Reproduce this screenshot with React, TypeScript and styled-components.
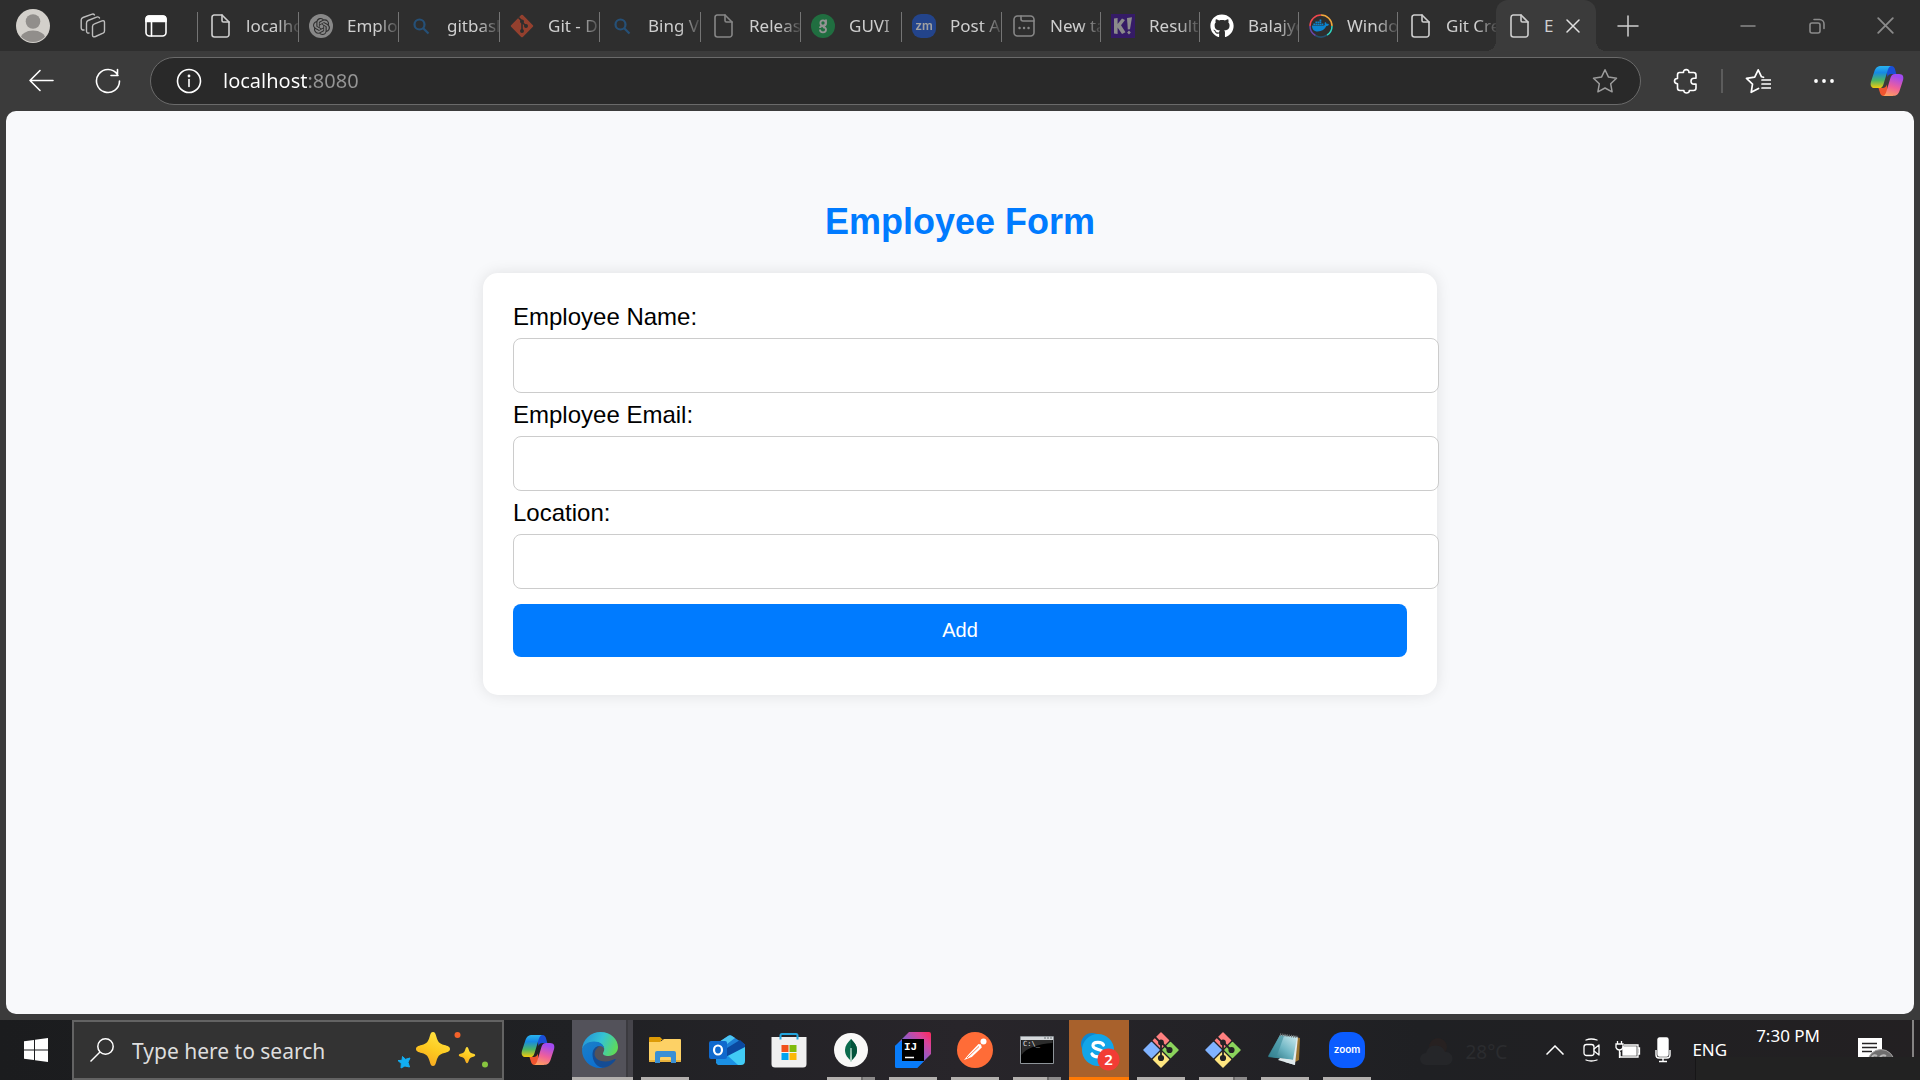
import React from 'react';
import styled, { createGlobalStyle, css } from 'styled-components';
import { FaDocker, FaGithub } from 'react-icons/fa';
import { SiOpenai } from 'react-icons/si';

const uiFont = '"Noto Sans", "Open Sans", sans-serif';
const pageFont = '"Liberation Sans", Arial, sans-serif';

const GlobalStyle = createGlobalStyle`
  *, *::before, *::after { box-sizing: border-box; }
  body { margin: 0; background: #3b3b3b; font-family: ${uiFont}; }
  button { border: 0; padding: 0; background: none; color: inherit; font: inherit; cursor: pointer; }
  svg { display: block; flex: none; }
`;

const Screen = styled.div`
  display: flex;
  flex-direction: column;
  min-height: 100vh;
  background: #3b3b3b;
`;

/* ---------- tab strip ---------- */

const TabStrip = styled.header`
  display: flex;
  height: 51px;
  background: #2e2e2e;
  color: #cfcfcf;
`;

const StripTools = styled.div`
  display: flex;
  align-items: center;
  justify-content: space-between;
  width: 197px;
  padding: 0 30px 0 16px;
`;

const IconButton = styled.button<{ $color?: string }>`
  display: flex;
  align-items: center;
  justify-content: center;
  color: ${(p) => p.$color ?? '#ffffff'};
`;

const WorkspacesButton = styled(IconButton)`
  margin-right: 9px;
`;

const TabList = styled.nav`
  display: flex;
`;

const Tab = styled.button<{ $width: number }>`
  display: flex;
  align-items: center;
  gap: 14px;
  width: ${(p) => p.$width}px;
  padding-left: 11px;
  background: linear-gradient(#747474, #747474) 0 12px / 1px 30px no-repeat;
  overflow: hidden;
  font-size: 17px;
  line-height: 24px;
`;

const TabTitle = styled.span`
  flex: 1;
  overflow: hidden;
  text-align: left;
  white-space: nowrap;
  mask-image: linear-gradient(90deg, #000 60%, rgba(0, 0, 0, 0.15) 100%);
`;

const Favicon = styled.span<{ $asleep?: boolean }>`
  display: flex;
  align-items: center;
  justify-content: center;
  flex: none;
  width: 24px;
  height: 24px;
  opacity: ${(p) => (p.$asleep ? 0.55 : 1)};
`;

const ActiveTab = styled.div`
  position: relative;
  display: flex;
  align-items: center;
  width: 100px;
  padding: 0 16px 0 11px;
  border-radius: 12px 12px 0 0;
  background: #3b3b3b;
  font-size: 17px;
  line-height: 24px;

  &::before,
  &::after {
    content: '';
    position: absolute;
    bottom: 0;
    width: 10px;
    height: 10px;
  }
  &::before {
    right: 100%;
    background: radial-gradient(circle at 0 0, #2e2e2e 10px, #3b3b3b 10px);
  }
  &::after {
    left: 100%;
    background: radial-gradient(circle at 100% 0, #2e2e2e 10px, #3b3b3b 10px);
  }
`;

const ActiveTitle = styled.span`
  flex: 1;
  padding-left: 13px;
`;

const NewTab = styled(IconButton)`
  width: 64px;
`;

const WindowControls = styled.div`
  display: flex;
  margin-left: auto;
`;

const WindowButton = styled(IconButton)`
  width: 69px;
`;

/* ---------- toolbar ---------- */

const Toolbar = styled.div`
  display: flex;
  align-items: center;
  height: 60px;
  padding: 0 16px 0 28px;
`;

const NavButtons = styled.div`
  display: flex;
  gap: 41px;
  margin-right: 29px;
`;

const AddressBar = styled.form`
  display: flex;
  flex: 1;
  align-items: center;
  gap: 21px;
  height: 48px;
  padding: 0 22px 0 25px;
  border: 1px solid #6a6a6a;
  border-radius: 24px;
  background: #292929;
`;

const AddressInput = styled.input`
  flex: 1;
  min-width: 0;
  padding: 0;
  border: 0;
  outline: 0;
  background: linear-gradient(90deg, #ffffff 84px, #959595 84px);
  background-clip: text;
  color: transparent;
  font: 20px/30px ${uiFont};
`;

const ToolbarActions = styled.div`
  display: flex;
  align-items: center;
  padding-left: 32px;
`;

const ToolbarDivider = styled.span`
  width: 2px;
  height: 24px;
  margin: 0 22px;
  background: #5c5c5c;
`;

const MoreButton = styled(IconButton)`
  margin: 0 36px 0 43px;
`;

/* ---------- employee page ---------- */

const Page = styled.main`
  flex: 1;
  margin: 0 6px 6px;
  padding-top: 90px;
  border-radius: 10px;
  background: #f8f9fb;
  color: #000000;
  font-family: ${pageFont};
`;

const PageTitle = styled.h1`
  margin: 0 0 30px;
  color: #007bff;
  font-size: 36px;
  line-height: 42px;
  text-align: center;
`;

const Card = styled.form`
  display: flex;
  flex-direction: column;
  gap: 8px;
  width: 50%;
  margin: 0 auto;
  padding: 30px;
  border-radius: 15px;
  background: #ffffff;
  box-shadow: 0 0 15px rgba(0, 0, 0, 0.1);
`;

const Label = styled.label`
  font-size: 24px;
  line-height: 27px;
`;

const TextField = styled.input`
  box-sizing: content-box;
  width: 100%;
  height: 23px;
  padding: 15px;
  border: 1px solid #cccccc;
  border-radius: 8px;
  background: #ffffff;
  font: 20px/23px ${pageFont};
`;

const SubmitButton = styled.button`
  height: 53px;
  margin: 7px 0 8px;
  border-radius: 8px;
  background: #007bff;
  color: #ffffff;
  font: 20px/23px ${pageFont};
`;

/* ---------- taskbar ---------- */

const Taskbar = styled.footer`
  position: relative;
  display: flex;
  height: 60px;
  background: linear-gradient(90deg, #1b1c1e 0, #202124 30%, #28252a 50%, #1f2023 74%, #232022 100%);
  color: #ffffff;
`;

const StartButton = styled(IconButton)`
  width: 72px;
`;

const SearchBox = styled.label`
  display: flex;
  align-items: center;
  gap: 17px;
  width: 432px;
  padding: 0 13px 0 15px;
  border: 2px solid #636363;
  background: #333333;
`;

const SearchInput = styled.input`
  flex: 1;
  min-width: 0;
  padding: 2px 0 0;
  border: 0;
  outline: 0;
  background: none;
  color: #dedede;
  font: 21px/30px ${uiFont};

  &::placeholder {
    color: #dedede;
    opacity: 1;
  }
`;

const AppRow = styled.div`
  display: flex;
  gap: 2px;
`;

type Running = 'no' | 'one' | 'many' | 'alert' | 'focused';

const appStates = {
  no: null,
  one: css`
    background: linear-gradient(#b3b0ae, #b3b0ae) no-repeat 6px 57px / 48px 3px;
  `,
  many: css`
    background: linear-gradient(90deg, #b3b0ae 34px, #6e6c6c 34px, #6e6c6c 36px, #8c8a8a 36px) no-repeat 6px 57px / 48px 3px;
  `,
  alert: css`
    padding-top: 3px;
    border-bottom: 3px solid #ff7a05;
    background: #a8612c;
  `,
  focused: css`
    width: 61px;
    padding: 3px 6px 0 0;
    border-bottom: 3px solid #b3b0ae;
    background: linear-gradient(90deg, #53525a 54px, #3b3a3f 54px, #3b3a3f 56px, #45444a 56px);
  `,
};

const AppButton = styled.button<{ $running: Running }>`
  display: flex;
  align-items: center;
  justify-content: center;
  width: 60px;
  ${(p) => appStates[p.$running]}
`;

const CopilotButton = styled(IconButton)`
  width: 68px;
`;

const Tray = styled.div`
  display: flex;
  align-items: flex-start;
  height: 60px;
  margin-left: auto;
  font-size: 17px;
  line-height: 22px;
`;

const Weather = styled.div`
  display: flex;
  align-items: center;
  gap: 10px;
  height: 60px;
  margin-right: 39px;
  padding-top: 4px;
  color: #2b2c2f;
  font-size: 19px;
`;

const TrayIcons = styled.div`
  display: flex;
  align-items: center;
  gap: 14px;
  height: 60px;
`;

const Language = styled.button`
  height: 22px;
  margin: 19px 0 0 21px;
`;

const Clock = styled.time`
  margin: 5px 0 0 29px;
`;

const Notifications = styled(IconButton)`
  margin: 17px 17px 0 38px;
`;

const ShowDesktop = styled.div`
  width: 8px;
  height: 37px;
  border-left: 2px solid #858383;
`;

/* A dark panel that hides the lower part of the notification area. */
const TrayCover = styled.div`
  position: absolute;
  right: 0;
  bottom: 0;
  width: 225px;
  height: 23px;
  border-left: 1px solid #171617;
  background: #222222;
`;

/* ---------- icons ---------- */

const line = { fill: 'none', stroke: 'currentColor', strokeLinecap: 'round', strokeLinejoin: 'round' } as const;

const DocumentIcon = () => (
  <svg width="24" height="24" viewBox="0 0 24 24" {...line} strokeWidth="1.6">
    <path d="M6 1h8l7 7v12.500a2.500 2.500 0 0 1-2.500 2.500h-12A2.500 2.500 0 0 1 4 20.500V3.500A2.500 2.500 0 0 1 6 1z" />
    <path d="M14 1v5.500A1.500 1.500 0 0 0 15.500 8H21" />
  </svg>
);

const AvatarIcon = () => (
  <svg width="34" height="34" viewBox="0 0 34 34">
    <clipPath id="avatar"><circle cx="17" cy="17" r="16" /></clipPath>
    <circle cx="17" cy="17" r="17" fill="#d3d0cb" />
    <g clipPath="url(#avatar)" fill="#918e8b">
      <circle cx="17" cy="12.500" r="7.300" />
      <ellipse cx="17" cy="30" rx="12.500" ry="8.500" />
    </g>
  </svg>
);

const WorkspacesIcon = () => (
  <svg width="26" height="26" viewBox="0 0 26 26" {...line} strokeWidth="1.400">
    <path d="M14.500 10.800l7.500-2.900q2.500-.8 2.500 1.500v8.600q0 1.500-1.500 2.200l-7.500 3.300q-3 1.200-3-1.600v-8.400q0-2 2-2.700z" />
    <path d="M9 20c-1.400.4-2.500-.4-2.500-2v-8q0-1.800 1.600-2.500l8.500-3.400q2.200-.7 2.900 1" />
    <path d="M4 17c-1.500.3-2.800-.6-2.800-2.300V7q0-1.800 1.800-2.500l8.500-3.200q2.200-.7 2.900 .6" />
  </svg>
);

const TabActionsIcon = () => (
  <svg width="22" height="22" viewBox="0 0 22 22" {...line} strokeWidth="1.600">
    <rect x="1" y="1" width="20" height="20" rx="3.500" />
    <path d="M1 6.500V4a3 3 0 0 1 3-3h14a3 3 0 0 1 3 3v2.500z" fill="currentColor" />
    <path d="M6.500 7v14" />
  </svg>
);

const SearchFavicon = () => (
  <svg width="24" height="24" viewBox="0 0 24 24" fill="none" stroke="#1e6cb4" strokeWidth="2.200">
    <circle cx="10.500" cy="10.500" r="5" />
    <path d="M14 14l5.500 5.500" />
  </svg>
);

const GitFavicon = () => (
  <svg width="24" height="24" viewBox="0 0 24 24">
    <rect x="3.700" y="3.700" width="16.600" height="16.600" rx="1.200" transform="rotate(45 12 12)" fill="#e8502f" />
    <g stroke="#2e2e2e" strokeWidth="1.600" fill="#2e2e2e">
      <path d="M8.500 3.500L12 7v10M12 8l4 4" fill="none" />
      <circle cx="12" cy="7.500" r="1.200" /><circle cx="12" cy="17" r="1.200" /><circle cx="16" cy="12" r="1.200" />
    </g>
  </svg>
);

const OpenAiFavicon = () => (
  <svg width="24" height="24" viewBox="0 0 24 24">
    <circle cx="12" cy="12" r="12" fill="#d2d2d2" />
    <SiOpenai x="4" y="4" width="16" height="16" color="#2e2e2e" />
  </svg>
);

const GuviFavicon = () => (
  <svg width="24" height="24" viewBox="0 0 24 24">
    <circle cx="12" cy="12" r="12" fill="#16a34f" />
    <g fill="none" stroke="#e8e8e8" strokeWidth="1.800">
      <circle cx="12" cy="9" r="2.600" />
      <path d="M15 5.500v3.500q0 3-3 3c-2 0-3 .8-3 2M9 15.500c0 3.800 6 3.800 6 0q0-2.200-3-2.200" />
    </g>
  </svg>
);

const ZmFavicon = () => (
  <svg width="24" height="24" viewBox="0 0 24 24">
    <rect width="24" height="24" rx="9" fill="#1b57d8" />
    <text x="12" y="16" textAnchor="middle" fontFamily="Inter, sans-serif" fontWeight="600" fontSize="12" fill="#fff">zm</text>
  </svg>
);

const NewTabFavicon = () => (
  <svg width="24" height="24" viewBox="0 0 24 24" {...line} strokeWidth="1.600">
    <rect x="2" y="2" width="20" height="20" rx="3.500" />
    <path d="M9 2v3a2 2 0 0 0 2 2h11" />
    <path d="M7.500 14h.1M12 14h.1M16.500 14h.1" strokeWidth="2.400" />
  </svg>
);

const KahootFavicon = () => (
  <svg width="24" height="24" viewBox="0 0 24 24">
    <rect width="24" height="24" fill="#3b0c94" />
    <g fill="#d8d8d8">
      <path d="M3 4.500l3.600-.5v6L11 4.500l3 1.400-4 5.400 4.500 7L11 20l-4.400-6.500V20L3 19.500z" />
      <path d="M16 4l5-.8-2 12-2.200.3z" /><path d="M18 16.500l1.800 2L18 20.600l-1.900-2z" />
    </g>
  </svg>
);

const DockerFavicon = () => (
  <svg width="24" height="24" viewBox="0 0 24 24" fill="none" strokeWidth="1.500">
    <path d="M1 12A11 11 0 0 1 12 1" stroke="#f0484e" />
    <path d="M12 1a11 11 0 0 1 11 11" stroke="#f3a83c" />
    <path d="M23 12a11 11 0 0 1-5 9.200" stroke="#2fd8c3" />
    <path d="M18 21.200a11 11 0 0 1-11.500.3" stroke="#24506e" />
    <path d="M6.500 21.500A11 11 0 0 1 1 12" stroke="#6a45a8" />
    <FaDocker x="3" y="3" width="18" height="18" color="#0b84d0" />
  </svg>
);

const CloseIcon = ({ size = 14 }: { size?: number }) => (
  <svg width={size} height={size} viewBox="0 0 14 14" {...line} strokeWidth="1.500">
    <path d="M1 1l12 12M13 1L1 13" />
  </svg>
);

const PlusIcon = () => (
  <svg width="22" height="22" viewBox="0 0 22 22" {...line} strokeWidth="1.500"><path d="M11 1v20M1 11h20" /></svg>
);

const MinimizeIcon = () => (
  <svg width="16" height="16" viewBox="0 0 16 16" {...line} strokeWidth="1.500"><path d="M1 8h14" /></svg>
);

const RestoreIcon = () => (
  <svg width="16" height="16" viewBox="0 0 16 16" {...line} strokeWidth="1.600">
    <rect x="1" y="5" width="10" height="10" rx="2" />
    <path d="M5 1.500h5.500A4.500 4.500 0 0 1 15 6v4.500" />
  </svg>
);

const BackIcon = () => (
  <svg width="26" height="26" viewBox="0 0 26 26" {...line} strokeWidth="1.600">
    <path d="M25 12.500H2M12 2.500L2 12.500l10 10" />
  </svg>
);

const ReloadIcon = () => (
  <svg width="26" height="26" viewBox="0 0 26 26" {...line} strokeWidth="1.600">
    <path d="M24.500 13A11.500 11.500 0 1 1 22.500 6.500V1.500M23 7.500h-7" />
  </svg>
);

const InfoIcon = () => (
  <svg width="26" height="26" viewBox="0 0 26 26" {...line} strokeWidth="1.600">
    <circle cx="13" cy="13" r="11.500" /><path d="M13 11.500v7" /><circle cx="13" cy="8" r=".6" fill="currentColor" />
  </svg>
);

const StarIcon = () => (
  <svg width="26" height="26" viewBox="0 0 26 26" {...line} strokeWidth="1.500">
    <path d="M13 1.800l3.500 7.300 8 1.100-5.800 5.600 1.400 8L13 20l-7.100 3.800 1.400-8-5.800-5.600 8-1.100z" />
  </svg>
);

const PuzzleIcon = () => (
  <svg width="26" height="26" viewBox="0 0 26 26" {...line} strokeWidth="1.600">
    <path d="M6.500 4.500h4c-.6-3.800 6-3.800 5.400 0h4.600q2.500 0 2.500 2.500v3.300h-2c-4 0-4 5.800 0 5.800h2V20q0 2.500-2.500 2.500h-4.200c.4 3.400-5.800 3.400-5.400 0H7q-2.500 0-2.500-2.500v-4.300c-4 0-4-5.200 0-5.200V7q0-2.500 2-2.500z" />
  </svg>
);

const FavoritesIcon = () => (
  <svg width="26" height="26" viewBox="0 0 26 26" {...line} strokeWidth="1.700">
    <path d="M13.500 20.500l-7.300 3.800 1.300-8.200L1.500 10.400l8.200-1.200L13.200 1.800l3.300 7 2 .5M17 12h8.500M17 16h8.500M17 20h8.500" />
  </svg>
);

const DotsIcon = () => (
  <svg width="20" height="6" viewBox="0 0 20 6" fill="currentColor">
    <circle cx="2" cy="3" r="1.900" /><circle cx="10" cy="3" r="1.900" /><circle cx="18" cy="3" r="1.900" />
  </svg>
);

const CopilotIcon = ({ id }: { id: string }) => (
  <svg width="34" height="32" viewBox="0 0 34 32">
    <defs>
      <linearGradient id={`${id}a`} x1="0" y1="0" x2="0" y2="1">
        <stop offset="0" stopColor="#2ab4f0" /><stop offset=".3" stopColor="#1689e4" /><stop offset=".65" stopColor="#4cb564" /><stop offset="1" stopColor="#f7cb0c" />
      </linearGradient>
      <linearGradient id={`${id}b`} x1="0.300" y1="0" x2="0" y2="1">
        <stop offset="0" stopColor="#a24af0" /><stop offset=".5" stopColor="#f0609a" /><stop offset="1" stopColor="#ffab57" />
      </linearGradient>
    </defs>
    <path d="M16 1h5.500c2 0 3 1.500 3.600 3.500L26.300 9h-4.500c-2.500 0-3.600 1-4.300 3z" fill="#1a4fd6" />
    <path d="M18 31h-4.500c-2 0-3-1.500-3.600-3.500L8.500 23h4c2.500 0 3.700-1.300 4.400-3.500z" fill="#f0552f" />
    <path d="M11.500 1H21c-1.700.4-2.600 2-3.300 4.200l-4.200 14c-.8 2.500-2 3.900-4.500 3.900H5c-4 0-5-2.800-4-6.400L4.400 6.200C5.600 2.700 7.500 1 11.500 1z" fill={`url(#${id}a)`} />
    <path d="M22.500 31H13c1.700-.4 2.600-2 3.300-4.200l4.200-14c.8-2.500 2-3.900 4.500-3.900h4c4 0 5 2.800 4 6.400l-3.400 10.500c-1.200 3.500-3.100 5.200-7.100 5.200z" fill={`url(#${id}b)`} />
  </svg>
);

const WindowsIcon = () => (
  <svg width="24" height="24" viewBox="0 0 24 24" fill="#fff">
    <path d="M0 3.300l10-1.400v9.600H0zM11 1.700L24 0v11.500H11zM0 12.500h10v9.600l-10-1.400zM11 12.500h13V24l-13-1.700z" />
  </svg>
);

const MagnifierIcon = () => (
  <svg width="26" height="26" viewBox="0 0 26 26" fill="none" stroke="#fff" strokeWidth="1.500">
    <circle cx="16.500" cy="9.500" r="7.700" /><path d="M11 15L1.500 24.500" />
  </svg>
);

const SparklesIcon = () => (
  <svg width="92" height="38" viewBox="0 0 92 38">
    <defs>
      <linearGradient id="spark" x1=".7" y1=".1" x2=".3" y2="1">
        <stop offset="0" stopColor="#ffdf3d" /><stop offset=".5" stopColor="#fdc91f" /><stop offset="1" stopColor="#f6a623" />
      </linearGradient>
    </defs>
    <path d="M36 1c2 0 2.600 2 3.300 4.500 1.500 5.200 2.700 7 8 8.500 3.500 1 5.700 1.600 5.700 4s-2.200 3-5.700 4c-5.300 1.500-6.500 3.300-8 8.500C38.600 33 38 35 36 35s-2.600-2-3.300-4.500c-1.500-5.200-2.700-7-8-8.500-3.500-1-5.700-1.600-5.700-4s2.200-3 5.700-4c5.300-1.500 6.500-3.300 8-8.500C33.400 3 34 1 36 1z" fill="url(#spark)" />
    <path d="M70 16c1 0 1.400 1.500 1.800 2.800.8 2.500 1.300 2.900 3.700 3.700 1.300.4 2.700.6 2.700 1.700s-1.400 1.300-2.700 1.700c-2.400.8-2.900 1.200-3.700 3.700-.4 1.300-.8 2.600-1.800 2.600s-1.400-1.300-1.800-2.600c-.8-2.500-1.300-2.900-3.700-3.700-1.300-.4-2.700-.6-2.700-1.700s1.400-1.300 2.700-1.700c2.400-.8 2.900-1.200 3.700-3.700.4-1.300.8-2.800 1.800-2.800z" fill="url(#spark)" />
    <path d="M5.500 25.500l3 2.800 4.500-1.300-2 4.200 1.500 4.800-4.600-1L4 37l.3-4.600L1 29.600l4-.3z" fill="#12aef2" stroke="#12aef2" strokeLinejoin="round" />
    <circle cx="60.500" cy="4" r="3" fill="#f4622a" />
    <circle cx="88" cy="33.500" r="3" fill="#88c53f" />
  </svg>
);

const EdgeIcon = () => (
  <svg width="36" height="36" viewBox="0 0 36 36">
    <defs>
      <linearGradient id="edgeTop" x1="0" y1=".3" x2="1" y2=".6"><stop offset="0" stopColor="#2493d8" /><stop offset=".5" stopColor="#34c3d4" /><stop offset="1" stopColor="#60dc55" /></linearGradient>
      <linearGradient id="edgeBody" x1="0" y1="0" x2=".6" y2="1"><stop offset="0" stopColor="#1a80c8" /><stop offset="1" stopColor="#0d6fd0" /></linearGradient>
    </defs>
    <path d="M0 18C.5 7 9 0 18.500 0 29 0 36 7.500 36 15c0 5.500-4.500 9-9.500 9-4 0-5.500-1.400-5.500-2.600 0-1 1.200-1.600 1.200-4.400 0-3.700-4-7-9.700-7C6 10 1.500 13.500 0 18z" fill="url(#edgeTop)" />
    <path d="M0 18c1-5 5.500-8.500 12-8.500 6 0 10.200 3.500 10.200 7.500 0-1.500-2.200-3-4.500-3C13 14 11 18 11 21.500 11 29 17 35 23 35c-1.500.6-3 1-5 1C8 36 0 28 0 18z" fill="url(#edgeBody)" />
    <path d="M17.700 14C14 16 12.500 19 12.500 22c0 3 3 7.500 11 7.500 4 0 7.500-1.500 9.200-2.400.8-.4 1.300.2.800 1C31 32 26 35.600 20.500 35.800 13.500 34.500 10.500 28 10.500 22.500 10.500 17.500 14 14 17.700 14z" fill="#144c94" />
  </svg>
);

const ExplorerIcon = () => (
  <svg width="32" height="28" viewBox="0 0 32 28">
    <path d="M0 2a1 1 0 0 1 1-1h10l3 3h-2v4H0z" fill="#dd9a06" />
    <path d="M0 6h11l4-3h16a1 1 0 0 1 1 1v21a1 1 0 0 1-1 1H1a1 1 0 0 1-1-1z" fill="#fdd165" />
    <path d="M0 24h32v1a1 1 0 0 1-1 1H1a1 1 0 0 1-1-1z" fill="#e9b33d" />
    <path d="M6 27V17a2 2 0 0 1 2-2h17a2 2 0 0 1 2 2v10h-5v-5a1 1 0 0 0-1-1h-9a1 1 0 0 0-1 1v5z" fill="#3a90d5" />
  </svg>
);

const OutlookIcon = () => (
  <svg width="36" height="32" viewBox="0 0 36 32">
    <path d="M7 10L19 2q2-1.500 4 0l13 8.500V24H7z" fill="#1d7fd6" />
    <path d="M10 8l9-6q2-1.500 4 0l3 2-12 9z" fill="#4cc5f2" />
    <path d="M18 14L31 6l5 4.500V14L18 24z" fill="#0b49a0" />
    <path d="M36 13v14a4 4 0 0 1-4 4H11a4 4 0 0 1-4-3z" fill="#41cbf5" />
    <path d="M7 22h12l10 9H11a4 4 0 0 1-4-4z" fill="#1b90e4" />
    <rect y="7" width="18" height="18" rx="2" fill="#1069cd" />
    <ellipse cx="9" cy="16" rx="4" ry="4.500" fill="none" stroke="#fff" strokeWidth="2.200" />
  </svg>
);

const StoreIcon = () => (
  <svg width="36" height="36" viewBox="0 0 36 36">
    <path d="M0.500 5h35v27a3.500 3.500 0 0 1-3.500 3.500H4A3.500 3.500 0 0 1 .5 32z" fill="#f0f0f0" />
    <path d="M9.500 7.500V3.500q0-1.500 1.500-1.500h14q1.500 0 1.500 1.500v4" fill="none" stroke="#23a5dd" strokeWidth="2" />
    <path d="M10.500 13h7v7h-7z" fill="#f1511b" /><path d="M18.500 13h7v7h-7z" fill="#80bb0a" />
    <path d="M10.500 21h7v7h-7z" fill="#00a3ee" /><path d="M18.500 21h7v7h-7z" fill="#fbb90a" />
  </svg>
);

const MongoIcon = () => (
  <svg width="36" height="36" viewBox="0 0 36 36">
    <circle cx="18" cy="18" r="17" fill="#f8f8f7" />
    <path d="M18 7c3.500 3.500 6 7 6 11 0 5-3 8.500-6 10.500C15 26.500 12 23 12 18c0-4 2.500-7.500 6-11z" fill="#0b6b4d" />
    <path d="M18 7c3.500 3.500 6 7 6 11 0 5-3 8.500-6 10.500z" fill="#02533b" />
    <path d="M17.300 16h1.400l.3 11-.6 3h-.8l-.6-3z" fill="#a8cfbf" />
  </svg>
);

const IntellijIcon = () => (
  <svg width="36" height="36" viewBox="0 0 36 36">
    <defs>
      <linearGradient id="ij" x1="0" y1="1" x2="1" y2="0"><stop offset=".35" stopColor="#087cfa" /><stop offset=".5" stopColor="#8060d0" /><stop offset=".8" stopColor="#d9439a" /><stop offset="1" stopColor="#fe2857" /></linearGradient>
    </defs>
    <path d="M14 0h20a2 2 0 0 1 2 2v20L22 36H2a2 2 0 0 1-2-2V14z" fill="url(#ij)" />
    <path d="M0 14l7-5v20h22l-7 7H2a2 2 0 0 1-2-2z" fill="#087cfa" />
    <rect x="7" y="7" width="22" height="22" fill="#000" />
    <path d="M10 25.500h9" stroke="#fff" strokeWidth="1.500" />
    <text x="9" y="18" fontFamily="Liberation Mono, monospace" fontWeight="700" fontSize="11" fill="#fff">IJ</text>
  </svg>
);

const PostmanIcon = () => (
  <svg width="36" height="36" viewBox="0 0 36 36">
    <circle cx="18" cy="18" r="18" fill="#ff6c37" />
    <circle cx="26.500" cy="9.500" r="3" fill="#fff" />
    <path d="M7 28l5-6 9.500-10 2.500.6.800 3-10 9.400z" fill="#fff" />
    <path d="M10 26l12-11.500" stroke="#ff6c37" strokeWidth=".9" />
  </svg>
);

const TerminalIcon = () => (
  <svg width="34" height="28" viewBox="0 0 34 28">
    <path d="M.5.5h33v27H.5z" fill="#000" stroke="#8e9499" />
    <path d="M1 1h32v3H1z" fill="#d5d8db" /><path d="M24 2h2M27 2h2M30 2h2" stroke="#6b7075" />
    <path d="M1.500 4h31v3C18 8 6 12 1.500 19z" fill="#2c2c2c" />
    <text x="3" y="10" fontFamily="DejaVu Sans Mono, monospace" fontSize="7" fill="#e0e0e0">C:\_</text>
  </svg>
);

const SkypeIcon = () => (
  <svg width="42" height="42" viewBox="-3 -3 42 42">
    <circle cx="11" cy="12" r="11" fill="#0f86cf" />
    <circle cx="22" cy="24" r="10" fill="#0b7cc8" />
    <circle cx="17" cy="18" r="16" fill="#12a5e8" />
    <path d="M22.500 13c-1.500-3.500-10.500-3.500-10.500.5 0 5 10.500 3 10.500 8 0 4.500-9.500 4.500-11.500.5" fill="none" stroke="#fff" strokeWidth="3.200" strokeLinecap="round" />
    <circle cx="27.500" cy="27.500" r="11" fill="#f23c35" />
    <text x="27.500" y="33" textAnchor="middle" fontFamily="Noto Sans, sans-serif" fontWeight="600" fontSize="15" fill="#fff">2</text>
  </svg>
);

const GitBashIcon = () => (
  <svg width="36" height="36" viewBox="0 0 36 36">
    <g strokeWidth="1.500" strokeLinejoin="round">
      <path d="M18 1l7.500 7.500L18 16l-7.500-7.500z" fill="#ff8080" stroke="#ff8080" />
      <path d="M27.500 10.500L35 18l-7.500 7.500L20 18z" fill="#8bd45c" stroke="#8bd45c" />
      <path d="M18 20l7.500 7.500L18 35l-7.500-7.500z" fill="#ffe680" stroke="#ffe680" />
      <path d="M8.500 10.500L16 18l-7.500 7.500L1 18z" fill="#80b3ff" stroke="#80b3ff" />
    </g>
    <g stroke="#242226" strokeWidth="1.800" fill="#242226">
      <path d="M11 4l7 7v15M18 10l8 8" fill="none" />
      <circle cx="18" cy="10.500" r="2" /><circle cx="26.500" cy="18" r="2.200" /><circle cx="18" cy="26" r="2.200" />
    </g>
  </svg>
);

const NotepadIcon = () => (
  <svg width="36" height="36" viewBox="0 0 36 36">
    <defs>
      <linearGradient id="pad" x1="0" y1="1" x2="1" y2="0"><stop offset="0" stopColor="#1d6a78" /><stop offset=".5" stopColor="#6fb6c4" /><stop offset="1" stopColor="#d3eef2" /></linearGradient>
    </defs>
    <path d="M29 5l4 1-1 22-4 2z" fill="#9a7432" />
    <path d="M13 3l18 2-3 28-10-3z" fill="#e4ecee" />
    <path d="M13 3l17 2-4 23-25-3z" fill="url(#pad)" />
    <path d="M13 3l4 1-8 22-8-2z" fill="#3b8b99" opacity=".6" />
    <path d="M13 26l14 2 1 5-17-5z" fill="#dfe9eb" />
    <path d="M13 2.500l18 2.500" stroke="#6d7476" strokeWidth="2.500" strokeDasharray="1.200 1" />
  </svg>
);

const ZoomIcon = () => (
  <svg width="36" height="36" viewBox="0 0 36 36">
    <rect width="36" height="36" rx="14" fill="#0b5cff" />
    <text x="18" y="21" textAnchor="middle" fontFamily="Inter, sans-serif" fontWeight="600" fontSize="10" fill="#fff">zoom</text>
  </svg>
);

const WeatherIcon = () => (
  <svg width="38" height="34" viewBox="0 0 38 34">
    <circle cx="20" cy="12" r="9" fill="#272121" />
    <path d="M8 30a6 6 0 0 1 0-12 10 10 0 0 1 19-1 6.500 6.500 0 0 1 2 13z" fill="#252629" />
  </svg>
);

const ChevronUpIcon = () => (
  <svg width="23" height="10" viewBox="0 0 23 10" fill="none" stroke="#fff" strokeWidth="1.500"><path d="M.5 9.500L9 1l8.500 8.500" /></svg>
);

const CameraIcon = () => (
  <svg width="18" height="24" viewBox="0 0 18 24" {...line} strokeWidth="1.300">
    <rect x="1" y="6.500" width="10" height="11" rx="2.500" /><path d="M11 11l5-4v10l-5-4M3 2q5-2 11 0M3 22q5 2 11 0" />
  </svg>
);

const BatteryIcon = () => (
  <svg width="26" height="18" viewBox="0 0 26 18" fill="none" stroke="#fff" strokeWidth="1.300">
    <path d="M9 4h14v12H5v-5M23 7h1.500v6H23" /><path d="M8 6h13v8H8z" fill="#fff" />
    <path d="M2.500 0v3M6.500 0v3M1 3h7v3.500Q7 9 4.500 9 2 9 1 6.500zM4.500 9v8" />
  </svg>
);

const MicIcon = () => (
  <svg width="16" height="26" viewBox="0 0 16 26" fill="none" stroke="#fff" strokeWidth="1.400">
    <rect x="3" y="1" width="10" height="18" rx="1.500" fill="#fff" /><path d="M1 13v5q0 3 3 3h8q3 0 3-3v-5M8 21v4M4 24.500h8" />
  </svg>
);

const NotificationIcon = () => (
  <svg width="37" height="26" viewBox="0 0 37 26">
    <path d="M0 1h24v20H9l-4 4v-4H0z" fill="#fff" />
    <path d="M4 6.500h15M4 10.500h15M4 14.500h10" stroke="#262425" strokeWidth="1.300" />
    <circle cx="23" cy="26" r="13.500" fill="#6f6e6e" stroke="#a5a3a3" />
    <path d="M14 20q2-3 5-1M22 20q3-3 6-1" stroke="#b9b8b8" strokeWidth="2" fill="none" />
  </svg>
);

/* ---------- data ---------- */

const tabs = [
  { title: 'localho', width: 101, icon: <DocumentIcon /> },
  { title: 'Emplo', width: 100, icon: <OpenAiFavicon />, asleep: true },
  { title: 'gitbash', width: 101, icon: <SearchFavicon />, asleep: true },
  { title: 'Git - D', width: 100, icon: <GitFavicon />, asleep: true },
  { title: 'Bing V', width: 101, icon: <SearchFavicon />, asleep: true },
  { title: 'Releas', width: 100, icon: <DocumentIcon />, asleep: true },
  { title: 'GUVI', width: 101, icon: <GuviFavicon />, asleep: true },
  { title: 'Post A', width: 100, icon: <ZmFavicon />, asleep: true },
  { title: 'New ta', width: 99, icon: <NewTabFavicon />, asleep: true },
  { title: 'Result', width: 99, icon: <KahootFavicon />, asleep: true },
  { title: 'Balajyo', width: 99, icon: <FaGithub size={24} color="#ffffff" /> },
  { title: 'Windo', width: 99, icon: <DockerFavicon /> },
  { title: 'Git Cre', width: 99, icon: <DocumentIcon /> },
];

const apps: { name: string; running: Running; icon: React.ReactNode }[] = [
  { name: 'Microsoft Edge', running: 'focused', icon: <EdgeIcon /> },
  { name: 'File Explorer', running: 'one', icon: <ExplorerIcon /> },
  { name: 'Outlook', running: 'no', icon: <OutlookIcon /> },
  { name: 'Microsoft Store', running: 'no', icon: <StoreIcon /> },
  { name: 'MongoDB Compass', running: 'many', icon: <MongoIcon /> },
  { name: 'IntelliJ IDEA', running: 'one', icon: <IntellijIcon /> },
  { name: 'Postman', running: 'one', icon: <PostmanIcon /> },
  { name: 'Command Prompt', running: 'many', icon: <TerminalIcon /> },
  { name: 'Skype', running: 'alert', icon: <SkypeIcon /> },
  { name: 'Git Bash', running: 'one', icon: <GitBashIcon /> },
  { name: 'Git GUI', running: 'many', icon: <GitBashIcon /> },
  { name: 'Notepad', running: 'one', icon: <NotepadIcon /> },
  { name: 'Zoom', running: 'one', icon: <ZoomIcon /> },
];

const fields = [
  { id: 'name', label: 'Employee Name:', type: 'text' },
  { id: 'email', label: 'Employee Email:', type: 'email' },
  { id: 'location', label: 'Location:', type: 'text' },
];

export default function App() {
  return (
    <Screen>
      <GlobalStyle />
      <TabStrip>
        <StripTools>
          <IconButton aria-label="Profile"><AvatarIcon /></IconButton>
          <WorkspacesButton aria-label="Workspaces" $color="#bdbdbd"><WorkspacesIcon /></WorkspacesButton>
          <IconButton aria-label="Tab actions"><TabActionsIcon /></IconButton>
        </StripTools>
        <TabList aria-label="Tabs">
          {tabs.map((tab) => (
            <Tab key={tab.title} $width={tab.width}>
              <Favicon $asleep={tab.asleep}>{tab.icon}</Favicon>
              <TabTitle>{tab.title}</TabTitle>
            </Tab>
          ))}
          <ActiveTab>
            <Favicon><DocumentIcon /></Favicon>
            <ActiveTitle>E</ActiveTitle>
            <IconButton aria-label="Close tab" $color="#e0e0e0"><CloseIcon /></IconButton>
          </ActiveTab>
          <NewTab aria-label="New tab" $color="#cfcfcf"><PlusIcon /></NewTab>
        </TabList>
        <WindowControls>
          <WindowButton aria-label="Minimize" $color="#8a8a8a"><MinimizeIcon /></WindowButton>
          <WindowButton aria-label="Restore" $color="#8a8a8a"><RestoreIcon /></WindowButton>
          <WindowButton aria-label="Close" $color="#8a8a8a"><CloseIcon size={17} /></WindowButton>
        </WindowControls>
      </TabStrip>

      <Toolbar>
        <NavButtons>
          <IconButton aria-label="Back"><BackIcon /></IconButton>
          <IconButton aria-label="Reload"><ReloadIcon /></IconButton>
        </NavButtons>
        <AddressBar onSubmit={(e) => e.preventDefault()}>
          <IconButton type="button" aria-label="Site information"><InfoIcon /></IconButton>
          <AddressInput aria-label="Address" defaultValue="localhost:8080" spellCheck={false} />
          <IconButton type="button" aria-label="Add to favorites" $color="#9c9c9c"><StarIcon /></IconButton>
        </AddressBar>
        <ToolbarActions>
          <IconButton aria-label="Extensions"><PuzzleIcon /></IconButton>
          <ToolbarDivider />
          <IconButton aria-label="Favorites"><FavoritesIcon /></IconButton>
          <MoreButton aria-label="More"><DotsIcon /></MoreButton>
          <IconButton aria-label="Copilot"><CopilotIcon id="side" /></IconButton>
        </ToolbarActions>
      </Toolbar>

      <Page>
        <PageTitle>Employee Form</PageTitle>
        <Card onSubmit={(e) => e.preventDefault()}>
          {fields.map((field) => (
            <React.Fragment key={field.id}>
              <Label htmlFor={field.id}>{field.label}</Label>
              <TextField id={field.id} type={field.type} />
            </React.Fragment>
          ))}
          <SubmitButton type="submit">Add</SubmitButton>
        </Card>
      </Page>

      <Taskbar>
        <StartButton aria-label="Start"><WindowsIcon /></StartButton>
        <SearchBox>
          <MagnifierIcon />
          <SearchInput aria-label="Search" placeholder="Type here to search" />
          <SparklesIcon />
        </SearchBox>
        <CopilotButton aria-label="Copilot"><CopilotIcon id="task" /></CopilotButton>
        <AppRow>
          {apps.map((app) => (
            <AppButton key={app.name} aria-label={app.name} $running={app.running}>{app.icon}</AppButton>
          ))}
        </AppRow>
        <Tray>
          <Weather><WeatherIcon />28°C</Weather>
          <TrayIcons><ChevronUpIcon /><CameraIcon /><BatteryIcon /><MicIcon /></TrayIcons>
          <Language>ENG</Language>
          <Clock>7:30 PM</Clock>
          <Notifications aria-label="Notifications"><NotificationIcon /></Notifications>
          <ShowDesktop />
        </Tray>
        <TrayCover />
      </Taskbar>
    </Screen>
  );
}
